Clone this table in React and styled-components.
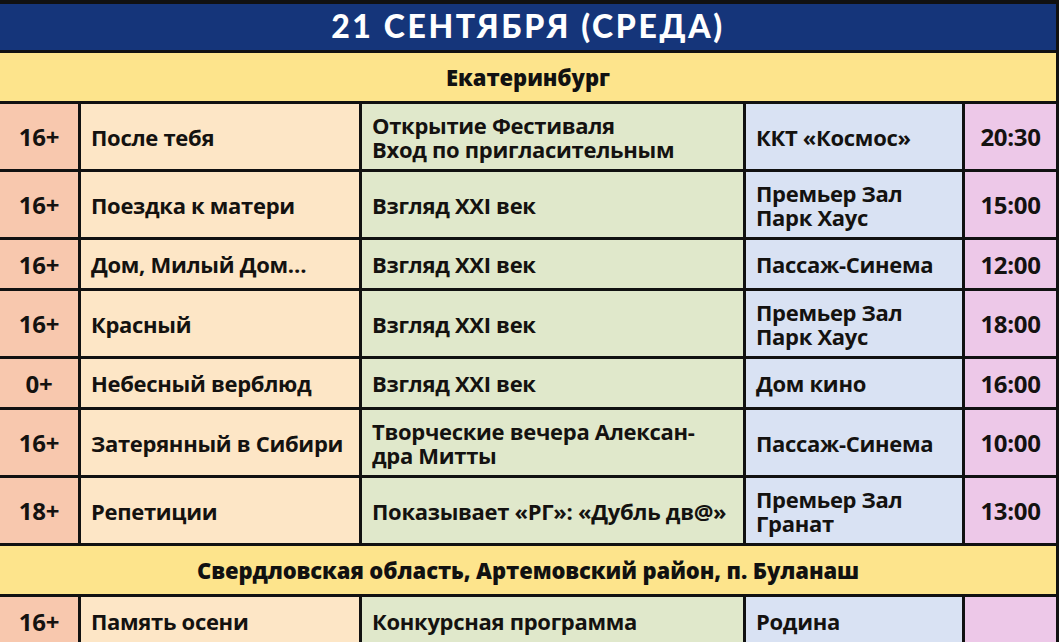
import React from 'react';
import styled, { createGlobalStyle } from 'styled-components';

const GlobalStyle = createGlobalStyle`
  html, body {
    margin: 0;
    padding: 0;
    background: #111;
  }
  body {
    width: 1059px;
    height: 642px;
    overflow: hidden;
    font-family: 'Open Sans', 'Noto Sans', sans-serif;
  }
`;

const COLS = '78px 278px 381px 216px 91px';

const schedule = [
  {
    title: 'Екатеринбург',
    rows: [
      { age: '16+', film: 'После тебя', program: ['Открытие Фестиваля', 'Вход по пригласительным'], place: ['ККТ «Космос»'], time: '20:30', tall: true },
      { age: '16+', film: 'Поездка к матери', program: ['Взгляд XXI век'], place: ['Премьер Зал', 'Парк Хаус'], time: '15:00', tall: true },
      { age: '16+', film: 'Дом, Милый Дом…', program: ['Взгляд XXI век'], place: ['Пассаж-Синема'], time: '12:00' },
      { age: '16+', film: 'Красный', program: ['Взгляд XXI век'], place: ['Премьер Зал', 'Парк Хаус'], time: '18:00', tall: true },
      { age: '0+', film: 'Небесный верблюд', program: ['Взгляд XXI век'], place: ['Дом кино'], time: '16:00' },
      { age: '16+', film: 'Затерянный в Сибири', program: ['Творческие вечера Алексан-', 'дра Митты'], place: ['Пассаж-Синема'], time: '10:00', tall: true },
      { age: '18+', film: 'Репетиции', program: ['Показывает «РГ»: «Дубль дв@»'], place: ['Премьер Зал', 'Гранат'], time: '13:00', tall: true },
    ],
  },
  {
    title: 'Свердловская область, Артемовский район, п. Буланаш',
    rows: [
      { age: '16+', film: 'Память осени', program: ['Конкурсная программа'], place: ['Родина'], time: '' },
    ],
  },
];

function Lines({ lines }) {
  return (
    <TextBlock>
      {lines.map((line, i) => (
        <div key={i}>{line}</div>
      ))}
    </TextBlock>
  );
}

function ScheduleRow({ row }) {
  return (
    <Row $tall={row.tall}>
      <Cell $bg="#f8c8ae" $center>{row.age}</Cell>
      <Cell $bg="#fde6c6">{row.film}</Cell>
      <Cell $bg="#e0e8cb">
        <Lines lines={row.program} />
      </Cell>
      <Cell $bg="#d9e2f3">
        <Lines lines={row.place} />
      </Cell>
      <Cell $bg="#edc8e8" $center>{row.time}</Cell>
    </Row>
  );
}

export default function App() {
  return (
    <React.Fragment>
      <GlobalStyle />
      <Table>
        <DayHeader>21 СЕНТЯБРЯ (СРЕДА)</DayHeader>
        {schedule.map((section) => (
          <React.Fragment key={section.title}>
            <SectionBand>{section.title}</SectionBand>
            {section.rows.map((row, i) => (
              <ScheduleRow key={i} row={row} />
            ))}
          </React.Fragment>
        ))}
      </Table>
    </React.Fragment>
  );
}

const Table = styled.div`
  display: flex;
  flex-direction: column;
  gap: 3px;
  background: #111;
  padding: 4px 3px 0 0;
  width: 1059px;
  box-sizing: border-box;
`;

const DayHeader = styled.div`
  height: 46px;
  box-sizing: border-box;
  padding-bottom: 4px;
  background: #15357a;
  color: #fff;
  display: flex;
  align-items: center;
  justify-content: center;
  font-family: 'Lato', sans-serif;
  font-weight: 900;
  font-size: 32px;
  letter-spacing: 2.6px;
`;

const SectionBand = styled.div`
  height: 48px;
  background: #fde48c;
  color: #111;
  display: flex;
  align-items: center;
  justify-content: center;
  font-weight: 800;
  font-size: 22px;
  letter-spacing: -0.1px;
`;

const Row = styled.div`
  display: grid;
  grid-template-columns: ${COLS};
  gap: 3px;
  height: ${(p) => (p.$tall ? '65px' : '48px')};
`;

const Cell = styled.div`
  background: ${(p) => p.$bg};
  display: flex;
  align-items: center;
  justify-content: ${(p) => (p.$center ? 'center' : 'flex-start')};
  padding: ${(p) => (p.$center ? '0' : '0 10px')};
  color: #141210;
  font-weight: 700;
  font-size: ${(p) => (p.$center ? '24px' : '22px')};
  letter-spacing: -0.3px;
  white-space: nowrap;
`;

const TextBlock = styled.div`
  line-height: 24px;
`;
